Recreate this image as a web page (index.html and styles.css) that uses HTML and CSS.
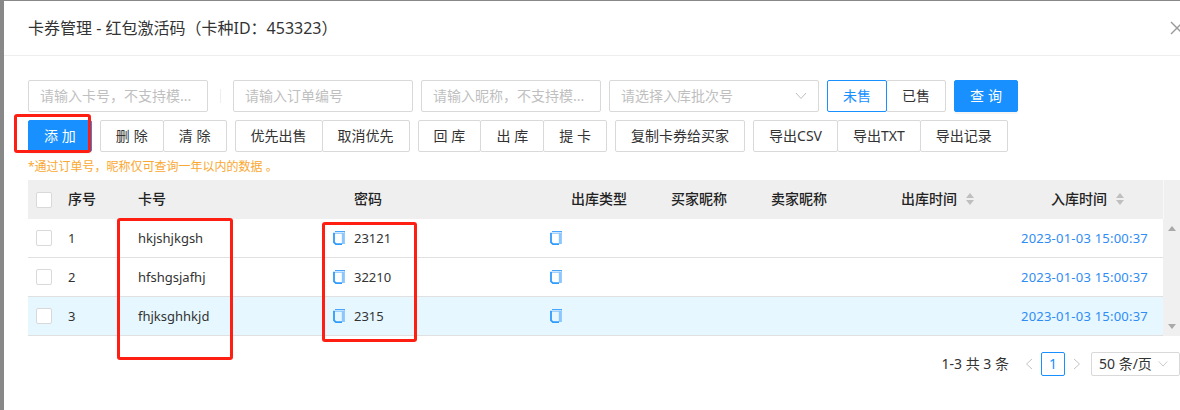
FILE: index.html
```html
<!DOCTYPE html>
<html lang="zh-CN">
<head>
<meta charset="utf-8">
<title>卡券管理</title>
<link rel="stylesheet" href="styles.css">
</head>
<body>
<svg class="defs" width="0" height="0" aria-hidden="true">
  <symbol id="copy" viewBox="0 0 12 14">
    <path d="M2 .5h10v12.5" fill="none" stroke="#4aa6fc" stroke-width="1"/>
    <path d="M0 1.6h9.5v1.2H0z" fill="#8cc6fd"/>
    <path d="M8.8 1.6H11.5V13H8.8z" fill="#8cc6fd"/>
    <path d="M1 2v9.4l2 1.8h6" fill="none" stroke="#2f9bfc" stroke-width="1.8"/>
  </symbol>
  <symbol id="chev" viewBox="0 0 12 8">
    <path d="M1 1l5 5.5L11 1" fill="none" stroke="currentColor" stroke-width="1"/>
  </symbol>
</svg>
<div class="edge"></div>
<main class="modal">
  <header class="head">
    <h1 class="title">卡券管理 - 红包激活码（卡种ID：453323）</h1>
    <svg class="close" viewBox="0 0 14 14" aria-label="关闭"><path d="M1 1l12 12M13 1L1 13" fill="none" stroke="currentColor" stroke-width="1.4"/></svg>
  </header>
  <section class="body">
    <div class="row">
      <div class="field w180"><span>请输入卡号，不支持模...</span></div>
      <span class="divider"></span>
      <div class="field w180"><span>请输入订单编号</span></div>
      <div class="field w180"><span>请输入昵称，不支持模...</span></div>
      <div class="field w210"><span>请选择入库批次号</span><svg class="chev"><use href="#chev"/></svg></div>
      <div class="group">
        <button class="btn seg-on">未售</button>
        <button class="btn seg">已售</button>
      </div>
      <button class="btn primary query">查 询</button>
    </div>
    <div class="row row2">
      <button class="btn primary">添 加</button>
      <div class="group"><button class="btn">删 除</button><button class="btn">清 除</button></div>
      <div class="group"><button class="btn">优先出售</button><button class="btn">取消优先</button></div>
      <div class="group"><button class="btn">回 库</button><button class="btn">出 库</button><button class="btn">提 卡</button></div>
      <button class="btn">复制卡券给买家</button>
      <div class="group"><button class="btn">导出CSV</button><button class="btn">导出TXT</button><button class="btn">导出记录</button></div>
    </div>
    <p class="note">*通过订单号，昵称仅可查询一年以内的数据 。</p>
    <div class="tablewrap">
      <div class="table">
        <div class="tr th">
          <div class="c"><i class="check"></i></div>
          <div class="c"><span class="lift">序号</span></div>
          <div class="c"><span class="lift">卡号</span></div>
          <div class="c pw"><span class="lift">密码</span></div>
          <div class="c ty"><span class="lift">出库类型</span></div>
          <div class="c"><span class="lift">买家昵称</span></div>
          <div class="c"><span class="lift">卖家昵称</span></div>
          <div class="c out"><span class="lift">出库时间</span><span class="sort"></span></div>
          <div class="c in"><span class="lift">入库时间</span><span class="sort"></span></div>
        </div>
        <div class="tr">
          <div class="c"><i class="check"></i></div><div class="c">1</div><div class="c">hkjshjkgsh</div>
          <div class="c"><svg class="ico"><use href="#copy"/></svg><span class="pwv">23121</span></div>
          <div class="c cp"><svg class="ico"><use href="#copy"/></svg></div><div class="c"></div><div class="c"></div><div class="c"></div>
          <div class="c date">2023-01-03 15:00:37</div>
        </div>
        <div class="tr">
          <div class="c"><i class="check"></i></div><div class="c">2</div><div class="c">hfshgsjafhj</div>
          <div class="c"><svg class="ico"><use href="#copy"/></svg><span class="pwv">32210</span></div>
          <div class="c cp"><svg class="ico"><use href="#copy"/></svg></div><div class="c"></div><div class="c"></div><div class="c"></div>
          <div class="c date">2023-01-03 15:00:37</div>
        </div>
        <div class="tr active">
          <div class="c"><i class="check"></i></div><div class="c">3</div><div class="c">fhjksghhkjd</div>
          <div class="c"><svg class="ico"><use href="#copy"/></svg><span class="pwv">2315</span></div>
          <div class="c cp"><svg class="ico"><use href="#copy"/></svg></div><div class="c"></div><div class="c"></div><div class="c"></div>
          <div class="c date">2023-01-03 15:00:37</div>
        </div>
      </div>
      <div class="scroll"><div class="scroll-top"></div><div class="scroll-track"><span class="up"></span><span class="down"></span></div></div>
    </div>
    <nav class="pager">
      <span class="total">1-3 共 3 条</span>
      <svg class="arrow" viewBox="0 0 8 12"><path d="M7 1L1.5 6 7 11" fill="none" stroke="currentColor"/></svg>
      <span class="page">1</span>
      <svg class="arrow" viewBox="0 0 8 12"><path d="M1 1l5.5 5L1 11" fill="none" stroke="currentColor"/></svg>
      <div class="size">50 条/页<svg class="chev"><use href="#chev"/></svg></div>
    </nav>
  </section>
</main>
<div class="mark m1"></div>
<div class="mark m2"></div>
<div class="mark m3"></div>
</body>
</html>
```
FILE: styles.css
```css
* { box-sizing: border-box; }
html, body { margin: 0; height: 410px; overflow: hidden; background: #fff; }
body {
  display: flex;
  position: relative;
  font: 14px/22px "Noto Sans", "Noto Sans CJK SC", sans-serif;
  color: #333;
}
.defs { position: absolute; }
.edge { width: 4px; flex: none; background: #888; }
.modal { flex: 1; min-width: 0; border-top: 1px solid #888; }
.head {
  height: 55px;
  border-bottom: 1px solid #eee;
  padding-left: 24px;
  display: flex;
  align-items: center;
  justify-content: space-between;
}
.title { margin: 0; font-size: 16px; font-weight: 400; color: #333; }
.close { width: 14px; height: 14px; flex: none; color: #999; margin-right: -4px; }
.body { padding: 24px 0 0 24px; }
.row { display: flex; gap: 8px; height: 32px; }
.row2 { margin-top: 8px; }
.field {
  height: 32px;
  border: 1px solid #d9d9d9;
  border-radius: 2px;
  padding: 0 11px;
  display: flex;
  align-items: center;
  justify-content: space-between;
  color: #bfbfbf;
  white-space: nowrap;
}
.w180 { width: 180px; }
.w210 { width: 210px; }
.divider { width: 1px; height: 14px; background: #eee; margin: 9px 4px 0 4px; }
.chev { width: 12px; height: 8px; color: #bfbfbf; }
.group { display: flex; }
.group .btn + .btn { margin-left: -1px; }
.btn {
  height: 32px;
  padding: 0 15px;
  border: 1px solid #d9d9d9;
  border-radius: 2px;
  background: #fff;
  color: #333;
  font: inherit;
  word-spacing: .2px;
  white-space: nowrap;
}
.primary { background: #1890ff; border-color: #1890ff; color: #fff; box-shadow: 0 2px 0 rgba(0,0,0,.04); }
.query { width: 64px; padding: 0; }
.seg-on { width: 60px; padding: 0; color: #1890ff; border-color: #1890ff; position: relative; z-index: 1; }
.seg { width: 60px; padding: 0; }
.note { margin: 6px 0 0; height: 22px; font-size: 12px; line-height: 18px; color: #faa832; }
.tablewrap { display: flex; width: 1152px; }
.table { width: 1135px; font-size: 13px; }
.tr {
  display: grid;
  grid-template-columns: 32px 71px 194px 216px 122px 100px 100px 150px 150px;
  height: 39px;
  border-bottom: 1px solid #e0e0e0;
  align-items: center;
}
.th { background: #efefef; font-size: 14px; font-weight: 500; color: #222; border-bottom: 0; }
.lift { margin-top: -2px; }
.c { padding-left: 8px; display: flex; align-items: center; white-space: nowrap; }
.c:nth-child(3) { padding-left: 7px; }
.pw { padding-left: 29px; }
.ty { padding-left: 30px; }
.out { padding-left: 38px; }
.in { padding-left: 38px; }
.cp { padding-left: 9px; }
.active { background: #e6f7ff; }
.check { display: block; width: 16px; height: 16px; border: 1px solid #d9d9d9; border-radius: 2px; background: #fff; }
.ico { width: 12px; height: 14px; flex: none; }
.pwv { margin-left: 9px; }
.date { color: #2f8cf4; letter-spacing: .22px; }
.sort { position: relative; width: 9px; height: 14px; margin-left: 9px; margin-top: -1px; }
.sort::before, .sort::after { content: ""; position: absolute; left: 0; border: 4.5px solid transparent; }
.sort::before { top: -3px; border-bottom: 5px solid #bfbfbf; }
.sort::after { bottom: -3px; border-top: 5px solid #bfbfbf; }
.scroll { width: 17px; display: flex; flex-direction: column; background: #f0f0f0; }
.scroll-top { height: 39px; border-left: 1px solid #f8f8f8; }
.scroll-track { position: relative; height: 117px; }
.up, .down { position: absolute; left: 5px; border: 4px solid transparent; }
.up { top: 7px; border-top: 0; border-bottom: 5px solid #a9a9a9; }
.down { bottom: 7px; border-bottom: 0; border-top: 5px solid #a9a9a9; }
.pager { display: flex; align-items: center; justify-content: flex-end; width: 1152px; height: 24px; margin-top: 16px; }
.total { margin-right: 16px; }
.arrow { width: 8px; height: 12px; color: #c4c4c4; }
.page { width: 24px; height: 24px; margin: 0 8px; border: 1px solid #1890ff; border-radius: 2px; color: #1890ff; text-align: center; line-height: 22px; }
.size { width: 89px; height: 24px; margin-left: 10px; border: 1px solid #d9d9d9; border-radius: 2px; padding: 0 11px 0 7px; display: flex; align-items: center; justify-content: space-between; }
.size .chev { width: 10px; }
.mark { position: absolute; border: 3px solid #ff1e12; border-radius: 3px; }
.m1 { left: 14px; top: 114px; width: 77px; height: 39px; }
.m2 { left: 117px; top: 218px; width: 116px; height: 142px; }
.m3 { left: 322px; top: 222px; width: 95px; height: 120px; }
```
